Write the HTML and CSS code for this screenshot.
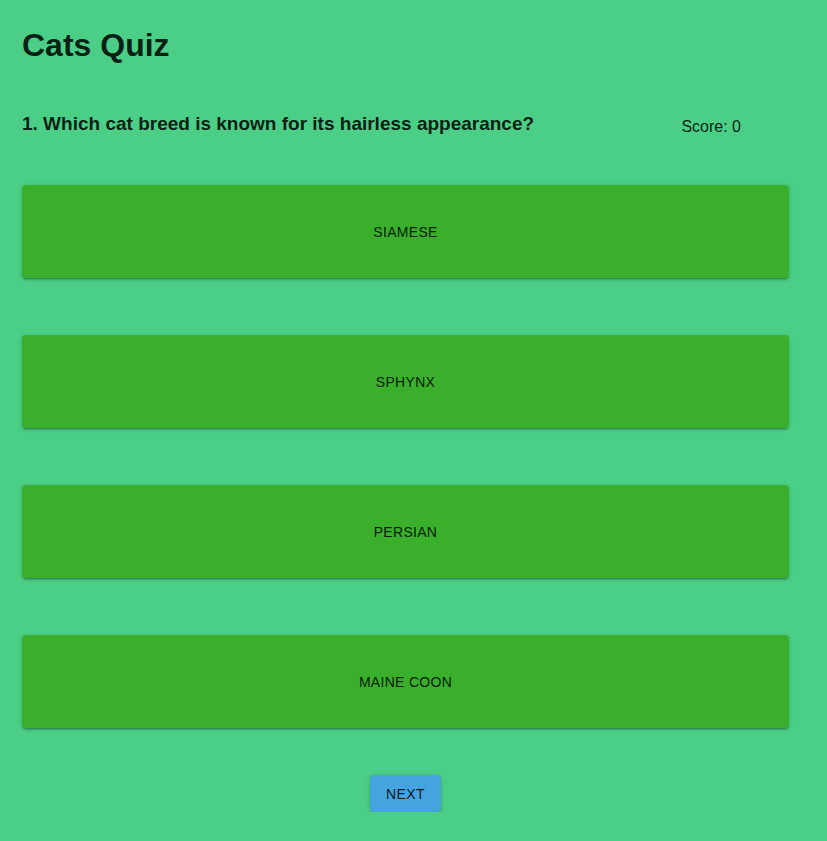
FILE: index.html
```html
<!DOCTYPE html>
<html>
<head>
<meta charset="utf-8">
<link rel="stylesheet" href="styles.css">
</head>
<body>
<main class="quiz">
  <h1 class="title">Cats Quiz</h1>
  <div class="question-row">
    <h2 class="question">1. Which cat breed is known for its hairless appearance?</h2>
    <div class="score">Score: 0</div>
  </div>
  <div class="options">
    <button class="option">Siamese</button>
    <button class="option">Sphynx</button>
    <button class="option">Persian</button>
    <button class="option">Maine Coon</button>
  </div>
  <div class="actions">
    <button class="next">Next</button>
  </div>
</main>
</body>
</html>
```
FILE: styles.css
```css
html, body {
  margin: 0;
  padding: 0;
  background: #4bce86;
  font-family: "Liberation Sans", Arial, sans-serif;
  color: rgba(0, 0, 0, 0.87);
}

.quiz {
  width: 767px;
  margin-left: 22px;
  padding-top: 27px;
}

.title {
  margin: 0;
  font-size: 32px;
  font-weight: 700;
  line-height: 37px;
}

.question-row {
  display: flex;
  justify-content: space-between;
  align-items: flex-start;
  margin-top: 49px;
}

.question {
  margin: 0;
  font-size: 19px;
  font-weight: 700;
  line-height: 22px;
}

.score {
  font-size: 16px;
  line-height: 18px;
  margin-top: 5px;
  margin-right: 48px;
}

.options {
  display: flex;
  flex-direction: column;
  gap: 57px;
  margin-top: 49px;
}

.option {
  height: 93px;
  border: none;
  border-radius: 4px;
  background: #3aaf2c;
  color: rgba(0, 0, 0, 0.87);
  font-family: inherit;
  font-size: 14px;
  letter-spacing: 0.3px;
  text-transform: uppercase;
  box-shadow: 0 3px 1px -2px rgba(0,0,0,0.2), 0 2px 2px 0 rgba(0,0,0,0.14), 0 1px 5px 0 rgba(0,0,0,0.12);
  cursor: pointer;
}

.actions {
  display: flex;
  justify-content: center;
  margin-top: 47px;
}

.next {
  height: 37px;
  padding: 0 16px;
  border: none;
  border-radius: 4px;
  background: #45a3e0;
  color: rgba(0, 0, 0, 0.87);
  font-family: inherit;
  font-size: 14px;
  letter-spacing: 0.4px;
  text-transform: uppercase;
  box-shadow: 0 3px 1px -2px rgba(0,0,0,0.2), 0 2px 2px 0 rgba(0,0,0,0.14), 0 1px 5px 0 rgba(0,0,0,0.12);
  cursor: pointer;
}
```
